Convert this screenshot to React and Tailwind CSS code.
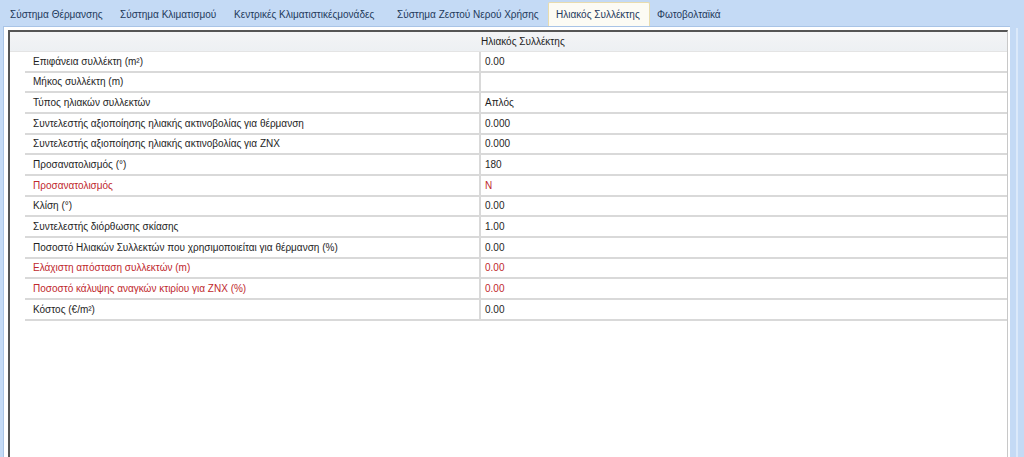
import React from 'react';

const tabs = [
  { label: 'Σύστημα Θέρμανσης', w: 'w-[110px]' },
  { label: 'Σύστημα Κλιματισμού', w: 'w-[114px]' },
  { label: 'Κεντρικές Κλιματιστικέςμονάδες', w: 'w-[163px]' },
  { label: 'Σύστημα Ζεστού Νερού Χρήσης', w: 'w-[158px]' },
  { label: 'Ηλιακός Συλλέκτης', w: 'w-[102px]', active: true },
  { label: 'Φωτοβολταϊκά', w: 'w-[90px]' },
];

const rows = [
  { label: 'Επιφάνεια συλλέκτη (m²)', value: '0.00' },
  { label: 'Μήκος συλλέκτη (m)', value: '' },
  { label: 'Τύπος ηλιακών συλλεκτών', value: 'Απλός' },
  { label: 'Συντελεστής αξιοποίησης ηλιακής ακτινοβολίας για θέρμανση', value: '0.000' },
  { label: 'Συντελεστής αξιοποίησης ηλιακής ακτινοβολίας για ZNX', value: '0.000' },
  { label: 'Προσανατολισμός (°)', value: '180' },
  { label: 'Προσανατολισμός', value: 'N', red: true },
  { label: 'Κλίση (°)', value: '0.00' },
  { label: 'Συντελεστής διόρθωσης σκίασης', value: '1.00' },
  { label: 'Ποσοστό Ηλιακών Συλλεκτών που χρησιμοποιείται για θέρμανση (%)', value: '0.00' },
  { label: 'Ελάχιστη απόσταση συλλεκτών (m)', value: '0.00', red: true },
  { label: 'Ποσοστό κάλυψης αναγκών κτιρίου για ZNX (%)', value: '0.00', red: true },
  { label: 'Κόστος (€/m²)', value: '0.00' },
];

export default function App() {
  return (
    <div className="w-[1024px] h-[457px] overflow-hidden bg-[#c4daf5] flex flex-col text-[10px] text-[#1e1e1e]" style={{ fontFamily: '"Liberation Sans", Arial, sans-serif' }}>
      {/* tab strip */}
      <div className="h-[26px] flex items-end pl-[3px] shrink-0">
        {tabs.map((t) => (
          <div
            key={t.label}
            className={
              t.active
                ? `${t.w} h-[24px] pl-[7px] flex items-center whitespace-nowrap bg-[#fcfbf4] border border-b-0 border-[#e8dcae] rounded-t-[2px] text-[#1e395b]`
                : `${t.w} h-[24px] pl-[7px] flex items-center whitespace-nowrap text-[#1e395b]`
            }
          >
            {t.label}
          </div>
        ))}
      </div>

      <div className="flex-1 flex min-h-0">
        {/* content panel */}
        <div className="ml-[3px] w-[1007px] bg-white border-l border-t border-[#a9c4e6] pl-[4px] pr-[2px] pt-[3px] flex">
          <div className="flex-1 border-l-2 border-t-2 border-[#555] border-r border-r-[#c8c8c8] flex flex-col bg-white">
            {/* header */}
            <div className="h-[20px] flex bg-gradient-to-b from-[#f3f4f6] to-[#edf0f3] border-b border-[#e4e4e4] shrink-0">
              <div className="w-[469px] shrink-0" />
              <div className="pl-[2px] flex items-center">Ηλιακός Συλλέκτης</div>
            </div>
            {rows.map((r) => (
              <div key={r.label} className="h-[20.67px] flex shrink-0">
                <div className="w-[15px] shrink-0" />
                <div className={`w-[454px] shrink-0 flex items-center pl-[8px] border-b-2 border-[#d9d9d9] ${r.red ? 'text-[#c0282d]' : ''}`}>
                  {r.label}
                </div>
                <div className={`flex-1 flex items-center pl-[4px] border-b-2 border-l-2 border-[#d9d9d9] ${r.red ? 'text-[#c0282d]' : ''}`}>
                  {r.value}
                </div>
              </div>
            ))}
          </div>
        </div>
        {/* right blue edge */}
        <div className="flex-1 flex justify-center">
          <div className="w-[2px] bg-[#dbe9fa] mt-[2px]" />
        </div>
      </div>
    </div>
  );
}
